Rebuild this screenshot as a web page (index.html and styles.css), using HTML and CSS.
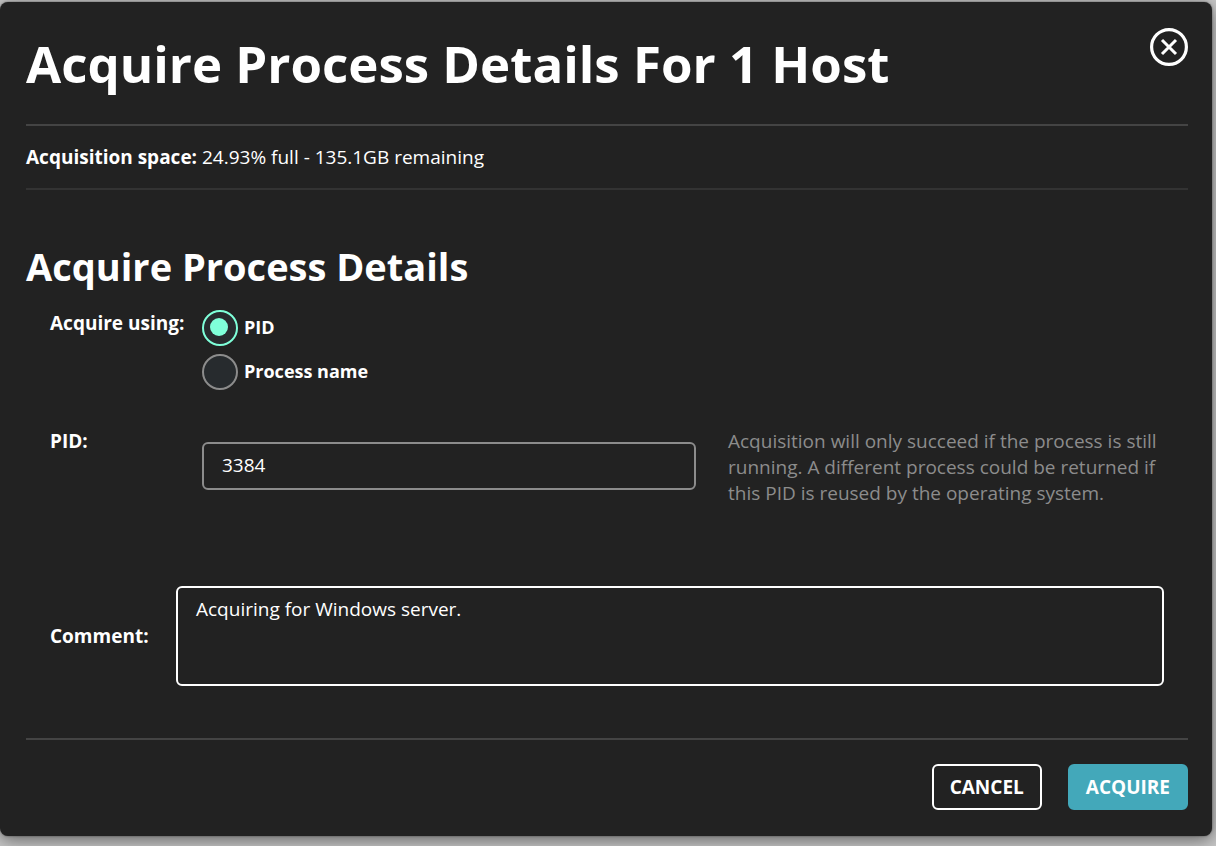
FILE: index.html
```html
<!DOCTYPE html>
<html lang="en">
<head>
    <meta charset="UTF-8">
    <meta name="viewport" content="width=device-width, initial-scale=1.0">
    <title>Acquire Process Details</title>
    <link rel="stylesheet" href="styles.css">
</head>
<body>
    <form class="modal">
        <header class="modal-header">
            <h1>Acquire Process Details For 1 Host</h1>
            <button type="button" class="close" aria-label="Close">
                <svg width="38" height="38" viewBox="0 0 38 38" fill="none" stroke="#fff">
                    <circle cx="19" cy="19" r="17.4" stroke-width="3.2"/>
                    <path d="M12 12l14 14M26 12L12 26" stroke-width="3"/>
                </svg>
            </button>
        </header>

        <p class="space"><strong>Acquisition space:</strong> 24.93% full - 135.1GB remaining</p>

        <section class="details">
            <h2>Acquire Process Details</h2>

            <div class="row" role="radiogroup" aria-labelledby="using">
                <span class="label" id="using">Acquire using:</span>
                <div class="radios">
                    <label class="radio"><input type="radio" name="using" checked>PID</label>
                    <label class="radio"><input type="radio" name="using">Process name</label>
                </div>
            </div>

            <div class="pid-row">
                <label class="label" for="pid">PID:</label>
                <input type="text" class="field" id="pid" value="3384">
                <p class="hint">Acquisition will only succeed if the process is still running. A different process could be returned if this PID is reused by the operating system.</p>
            </div>

            <div class="row comment-row">
                <label class="label" for="comment">Comment:</label>
                <textarea class="comment" id="comment">Acquiring for Windows server.</textarea>
            </div>
        </section>

        <footer class="modal-footer">
            <button type="button" class="btn">CANCEL</button>
            <button type="submit" class="btn btn-primary">ACQUIRE</button>
        </footer>
    </form>
</body>
</html>
```
FILE: styles.css
```css
* {
    box-sizing: border-box;
}
body {
    margin: 0;
    padding: 2px 4px 10px 0;
    background: #c8c8c8;
    color: #fff;
    font-family: "Open Sans", sans-serif;
    font-size: 19px;
    line-height: 26px;
}
h1, h2, p {
    margin: 0;
}
.modal {
    padding: 0 24px 26px 26px;
    background: #222;
    border-radius: 8px;
    box-shadow: 0 0 2px rgba(0,0,0,0.5), 0 4px 18px rgba(0,0,0,0.5);
}

/* header */
.modal-header {
    display: flex;
    justify-content: space-between;
    align-items: flex-start;
    padding: 26px 0;
    border-bottom: 2px solid #444;
}
h1 {
    font-size: 51px;
    line-height: 70px;
}
.close {
    padding: 0;
    border: none;
    background: none;
    cursor: pointer;
}
.close svg {
    display: block;
}
.space {
    padding: 18px 0;
    border-bottom: 2px solid #333;
}

/* form */
.details {
    padding: 50px 24px 52px;
}
h2 {
    margin: 0 -24px 18px;
    font-size: 38px;
    line-height: 52px;
}
.row {
    display: flex;
    align-items: flex-start;
}
.label {
    flex: none;
    width: 152px;
    font-weight: bold;
}
.radios {
    display: flex;
    flex-direction: column;
    gap: 8px;
}
.radio {
    display: flex;
    gap: 6px;
    font-size: 18px;
    font-weight: bold;
    line-height: 34px;
}
.radio input {
    appearance: none;
    width: 36px;
    height: 36px;
    margin: 0;
    border: 2px solid #8c8c8c;
    border-radius: 50%;
    background: #272b2e;
}
.radio input:checked {
    border-color: #7fffd9;
}
.radio input:checked::before {
    content: "";
    display: block;
    width: 18px;
    height: 18px;
    margin: 6px;
    border-radius: 50%;
    background: #7fffd9;
}
.pid-row {
    display: grid;
    grid-template-columns: 152px 494fr 468fr;
    align-items: start;
    margin-top: 38px;
}
.field,
.comment {
    border: 2px solid #8c8c8c;
    border-radius: 6px;
    background: #222;
    color: #fff;
    font: inherit;
}
.field {
    width: 100%;
    height: 48px;
    margin-top: 14px;
    padding: 0 18px 2px;
}
.hint {
    padding-left: 32px;
    color: #8c8c8c;
}
.comment-row {
    align-items: center;
    margin-top: 80px;
}
.comment-row .label {
    width: 126px;
}
.comment {
    flex: 1;
    height: 100px;
    padding: 8px 18px;
    border-color: #fff;
    resize: none;
}

/* footer */
.modal-footer {
    display: flex;
    justify-content: flex-end;
    gap: 26px;
    padding-top: 24px;
    border-top: 2px solid #444;
}
.btn {
    height: 46px;
    padding: 0 16px;
    border: 2px solid #fff;
    border-radius: 6px;
    background: #222;
    color: #fff;
    font: inherit;
    font-weight: bold;
    cursor: pointer;
}
.btn-primary {
    border-color: #43a8ba;
    background: #43a8ba;
}
```
